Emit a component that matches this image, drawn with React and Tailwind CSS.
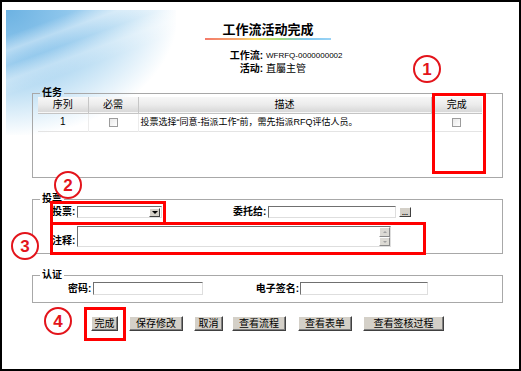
import React from 'react';

const font = "font-['Liberation_Sans','Noto_Sans_CJK_SC',sans-serif]";

const Checkbox = () => (
  <span className="inline-block w-[9px] h-[9px] border border-[#9c9c9c] bg-[linear-gradient(135deg,#e8e8e8,#ffffff)] align-middle" />
);

const WinButton = ({ label, w, ml }) => (
  <button
    className={`h-[15px] ${w} ${ml} flex items-center justify-center bg-[#d4d0c8] border border-t-white border-l-white border-r-[#404040] border-b-[#404040] shadow-[inset_-1px_-1px_0_#808080] text-[10px] leading-none text-black`}
  >
    {label}
  </button>
);

const Input = ({ w }) => (
  <div className={`${w} h-[13px] bg-white border border-t-[#707070] border-l-[#707070] border-r-[#dedede] border-b-[#dedede]`} />
);

const Marker = ({ n, pos }) => (
  <div
    className={`absolute ${pos} w-[28px] h-[28px] rounded-full border-2 border-[#e3141b] bg-white flex items-center justify-center font-['Liberation_Sans',sans-serif] font-bold text-[17px] leading-none text-[#e3141b]`}
  >
    {n}
  </div>
);

const App = () => {
  return (
    <div className={`relative w-[521px] h-[371px] border-2 border-black bg-white overflow-hidden ${font} text-black`}>
      {/* decoracion azul de la esquina */}
      <div className="absolute left-[4px] top-[8px] w-[170px] h-[125px] bg-[radial-gradient(ellipse_at_top_left,#6cb2e2_0%,#8ec6ec_25%,#c4e2f5_48%,rgba(255,255,255,0)_72%)]" />
      <div className="absolute left-[4px] top-[8px] w-[170px] h-[125px] bg-[linear-gradient(160deg,rgba(255,255,255,0)_14%,rgba(255,255,255,0.4)_22%,rgba(255,255,255,0)_30%,rgba(255,255,255,0.3)_38%,rgba(255,255,255,0)_46%)]" />

      <div className="relative">
        {/* encabezado */}
        <div className="pl-[15px] flex flex-col items-center">
          <div className="mt-[20px] text-[13px] leading-[16px] font-bold">工作流活动完成</div>
          <div className="w-[126px] h-[2px] bg-[linear-gradient(90deg,#f47b6b_0%,#f4a66b_25%,#f4e06b_40%,#9fdc7c_60%,#7fc8f0_80%,#9ad3f5_100%)]" />
        </div>

        <div className="mt-[9px] ml-[201px] text-[10px] leading-[13px]">
          <div className="flex items-center">
            <span className="w-[60px] text-right font-bold">工作流:</span>
            <span className="ml-[3px] text-[8px] font-['Liberation_Sans',sans-serif]">WFRFQ-0000000002</span>
          </div>
          <div className="flex items-center">
            <span className="w-[60px] text-right font-bold">活动:</span>
            <span className="ml-[3px]">直屬主管</span>
          </div>
        </div>

        {/* tareas */}
        <fieldset className="mt-[11px] ml-[30px] w-[471px] border border-[#a8a8a8] p-0">
          <legend className="ml-[7px] px-[2px] text-[10px] leading-[14px] font-bold">任务</legend>
          <div className="-mt-[3px] h-[80px] pl-[5px]">
            <table className="w-[444px] border-collapse text-[10px] leading-none table-fixed">
              <thead>
                <tr className="h-[16px] bg-[linear-gradient(180deg,#f7f7f7_0%,#ececec_50%,#d8d8d8_100%)] border-b border-[#c4c4c4]">
                  <th className="w-[50px] font-normal border-r border-[#c6c6c6]">序列</th>
                  <th className="w-[50px] font-normal border-r border-[#c6c6c6]">必需</th>
                  <th className="w-[293px] font-normal border-r border-[#c6c6c6]">描述</th>
                  <th className="w-[51px] font-normal">完成</th>
                </tr>
              </thead>
              <tbody>
                <tr className="h-[18px] border-b border-[#e4e4e4]">
                  <td className="text-center border-r border-[#ececec]">1</td>
                  <td className="text-center border-r border-[#ececec]"><Checkbox /></td>
                  <td className="pl-[2px] whitespace-nowrap text-[9px] border-r border-[#ececec]">投票选择“同意-指派工作”前，需先指派RFQ评估人员。</td>
                  <td className="text-center"><Checkbox /></td>
                </tr>
              </tbody>
            </table>
          </div>
        </fieldset>

        {/* votacion */}
        <fieldset className="mt-[14px] ml-[30px] w-[471px] border border-[#a8a8a8] p-0">
          <legend className="ml-[7px] px-[2px] text-[10px] leading-[14px] font-bold">投票</legend>
          <div className="pl-[19px] pb-[6px] text-[10px] leading-none font-bold">
            <div className="h-[12px] flex items-center">
              <span className="w-[25px]">投票:</span>
              <div className="w-[85px] h-[12px] bg-white border border-t-[#707070] border-l-[#707070] border-r-[#dedede] border-b-[#dedede] flex justify-end items-center pr-[1px]">
                <div className="w-[11px] h-[9px] bg-[#d4d0c8] border border-t-white border-l-white border-r-[#404040] border-b-[#404040] flex items-center justify-center">
                  <div className="w-0 h-0 border-l-[3px] border-r-[3px] border-t-[3px] border-l-transparent border-r-transparent border-t-black" />
                </div>
              </div>
              <span className="ml-[71px] w-[35px]">委托给:</span>
              <div className="w-[128px] h-[12px] bg-white border border-t-[#707070] border-l-[#707070] border-r-[#dedede] border-b-[#dedede]" />
              <div className="ml-[3px] w-[12px] h-[10px] bg-[#d4d0c8] border border-t-white border-l-white border-r-[#404040] border-b-[#404040] flex items-end justify-center text-[7px] leading-[6px]">...</div>
            </div>
            <div className="mt-[8px] h-[21px] flex items-center">
              <span className="w-[25px] mt-[8px]">注释:</span>
              <div className="w-[314px] h-[21px] bg-white border border-t-[#707070] border-l-[#707070] border-r-[#dedede] border-b-[#dedede] flex justify-end">
                <div className="w-[11px] flex flex-col">
                  <div className="h-[10px] bg-[#dcdad4] border border-t-white border-l-white border-r-[#8a8a8a] border-b-[#8a8a8a] flex items-center justify-center">
                    <div className="w-0 h-0 border-l-[2px] border-r-[2px] border-b-[2px] border-l-transparent border-r-transparent border-b-[#a0a0a0]" />
                  </div>
                  <div className="h-[9px] bg-[#dcdad4] border border-t-white border-l-white border-r-[#8a8a8a] border-b-[#8a8a8a] flex items-center justify-center">
                    <div className="w-0 h-0 border-l-[2px] border-r-[2px] border-t-[2px] border-l-transparent border-r-transparent border-t-[#a0a0a0]" />
                  </div>
                </div>
              </div>
            </div>
          </div>
        </fieldset>

        {/* autenticacion */}
        <fieldset className="mt-[14px] ml-[30px] w-[471px] border border-[#a8a8a8] p-0">
          <legend className="ml-[7px] px-[2px] text-[10px] leading-[14px] font-bold">认证</legend>
          <div className="pl-[35px] pb-[7px] flex items-center text-[10px] leading-none font-bold">
            <span className="w-[25px]">密码:</span>
            <Input w="w-[110px]" />
            <span className="w-[96px] text-right">电子签名:</span>
            <div className="ml-[1px]"><Input w="w-[128px]" /></div>
          </div>
        </fieldset>

        {/* botones */}
        <div className="mt-[13px] ml-[89px] flex">
          <WinButton label="完成" w="w-[27px]" ml="" />
          <WinButton label="保存修改" w="w-[54px]" ml="ml-[11px]" />
          <WinButton label="取消" w="w-[29px]" ml="ml-[11px]" />
          <WinButton label="查看流程" w="w-[54px]" ml="ml-[9px]" />
          <WinButton label="查看表单" w="w-[54px]" ml="ml-[12px]" />
          <WinButton label="查看签核过程" w="w-[81px]" ml="ml-[11px]" />
        </div>
      </div>

      {/* anotaciones */}
      <div className="absolute left-[430px] top-[91px] w-[54px] h-[81px] border-[3px] border-[#ff0000]" />
      <div className="absolute left-[48px] top-[199px] w-[116px] h-[24px] border-[3px] border-[#ff0000]" />
      <div className="absolute left-[48px] top-[220px] w-[376px] h-[33px] border-[3px] border-[#ff0000]" />
      <div className="absolute left-[82px] top-[305px] w-[42px] h-[34px] border-[3px] border-[#ff0000]" />

      <Marker n="1" pos="left-[411px] top-[53px]" />
      <Marker n="2" pos="left-[52px] top-[169px]" />
      <Marker n="3" pos="left-[9px] top-[230px]" />
      <Marker n="4" pos="left-[42px] top-[305px]" />
    </div>
  );
};

export default App;
